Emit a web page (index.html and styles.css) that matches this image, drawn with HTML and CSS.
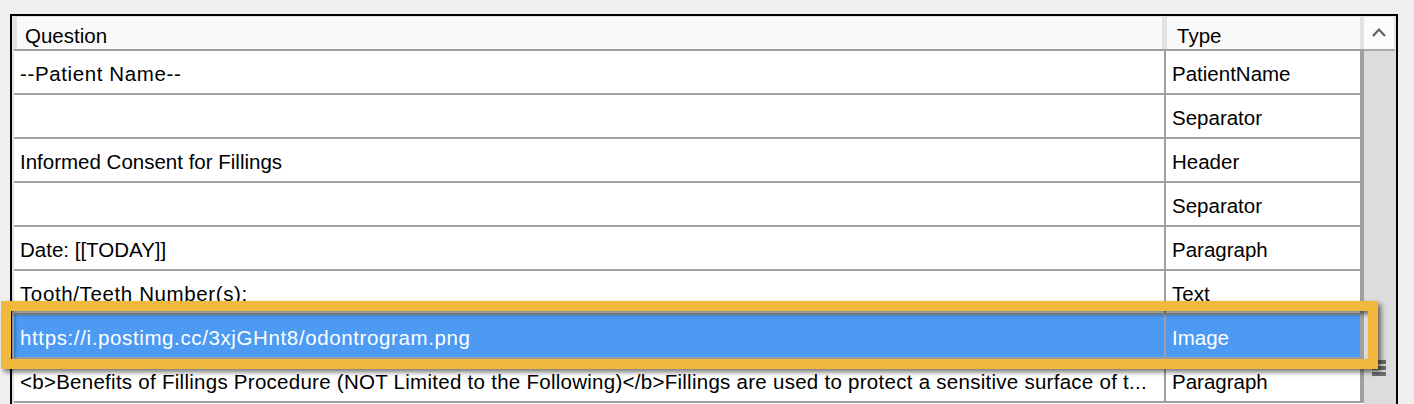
FILE: index.html
```html
<!DOCTYPE html>
<html lang="en">
<head>
<meta charset="utf-8">
<title>Questions</title>
<link rel="stylesheet" href="styles.css">
</head>
<body>
<div class="frame">
  <div class="grid">
    <div class="header">
      <div class="hcell q">Question</div>
      <div class="hcell t">Type</div>
      <div class="hfill"></div>
    </div>
    <div class="row"><div class="cell q sp-lg">--Patient Name--</div><div class="cell t">PatientName</div></div>
    <div class="row"><div class="cell q"></div><div class="cell t">Separator</div></div>
    <div class="row"><div class="cell q">Informed Consent for Fillings</div><div class="cell t">Header</div></div>
    <div class="row"><div class="cell q"></div><div class="cell t">Separator</div></div>
    <div class="row"><div class="cell q">Date: [[TODAY]]</div><div class="cell t">Paragraph</div></div>
    <div class="row"><div class="cell q sp-lg">Tooth/Teeth Number(s):</div><div class="cell t">Text</div></div>
    <div class="row selected"><div class="cell q sp-lg">https://i.postimg.cc/3xjGHnt8/odontrogram.png</div><div class="cell t">Image</div></div>
    <div class="row"><div class="cell q sp-md">&lt;b&gt;Benefits of Fillings Procedure (NOT Limited to the Following)&lt;/b&gt;Fillings are used to protect a sensitive surface of t...</div><div class="cell t">Paragraph</div></div>
  </div>
  <div class="scrollbar">
    <div class="sb-up">
      <svg width="14" height="10" viewBox="0 0 14 10"><polyline points="1,9 7,2.5 13,9" fill="none" stroke="#606060" stroke-width="2.2"/></svg>
    </div>
    <div class="sb-track">
      <div class="grip"><span></span><span></span><span></span></div>
    </div>
  </div>
</div>
<div class="highlight"></div>
</body>
</html>
```
FILE: styles.css
```css
html, body {
  margin: 0;
  padding: 0;
  height: 404px;
  overflow: hidden;
}
body {
  background: #f0f0f0;
  font-family: "Liberation Sans", Arial, sans-serif;
  font-size: 20.5px;
  color: #000;
  position: relative;
}
.frame {
  margin: 14px 0 0 10px;
  width: 1388px;
  height: 390px;
  box-sizing: border-box;
  border: 2px solid #000;
  border-bottom: none;
  display: flex;
  background: #fff;
  overflow: hidden;
}
.grid {
  width: 1352px;
  box-sizing: border-box;
  border-left: 2px solid #e2e2e2;
  display: flex;
  flex-direction: column;
  background: #fff;
}
.header {
  display: flex;
  height: 35px;
  flex: none;
  box-sizing: border-box;
  border-bottom: 2px solid #a0a0a0;
}
.hcell {
  box-sizing: border-box;
  background: #fafafa;
  border-top: 1px solid #e3e3e3;
  display: flex;
  align-items: center;
  white-space: nowrap;
  padding-top: 6px;
}
.hcell.q {
  width: 1150px;
  border-left: 3px solid #e3e3e3;
  border-right: 2px solid #e3e3e3;
  padding-left: 8px;
}
.hcell.t {
  width: 196px;
  border-left: 3px solid #e3e3e3;
  padding-left: 10px;
}
.hfill {
  width: 4px;
  background: #e3e3e3;
}
.row {
  display: flex;
  height: 44px;
  flex: none;
  box-sizing: border-box;
  border-bottom: 2px solid #a0a0a0;
  border-right: 4px solid #a0a0a0;
}
.cell {
  box-sizing: border-box;
  display: flex;
  align-items: center;
  white-space: nowrap;
  overflow: hidden;
  padding-left: 6px;
  padding-top: 4px;
}
.cell.q {
  width: 1152px;
  border-right: 2px solid #a0a0a0;
}
.cell.t {
  flex: 1;
}
.sp-md {
  letter-spacing: 0.27px;
}
.sp-lg {
  letter-spacing: 0.62px;
}
.row.selected {
  background: #4c9af2;
  color: #fff;
}
.scrollbar {
  width: 32px;
  display: flex;
  flex-direction: column;
  background: #dcdcdc;
}
.sb-up {
  height: 35px;
  flex: none;
  box-sizing: border-box;
  background: #fbfbfb;
  border-top: 1px solid #e3e3e3;
  border-right: 2px solid #e3e3e3;
  border-bottom: 2px solid #a9a9a9;
  display: flex;
  align-items: center;
  justify-content: center;
  padding-bottom: 2px;
}
.sb-track {
  flex: 1;
  display: flex;
  flex-direction: column;
  padding-left: 8px;
}
.grip {
  margin-top: 309px;
  display: flex;
  flex-direction: column;
  gap: 2px;
}
.grip span {
  display: block;
  width: 14px;
  height: 4px;
  background: #6d6d6d;
}
.highlight {
  position: absolute;
  left: 1px;
  top: 301px;
  width: 1377px;
  height: 68px;
  box-sizing: border-box;
  border: 10px solid #f0b83c;
  box-shadow: 3px 3px 5px rgba(0, 0, 0, 0.55), inset 3px 3px 4px rgba(0, 0, 0, 0.5);
}
```
